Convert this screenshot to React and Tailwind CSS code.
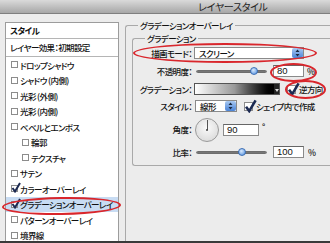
const effects = [
  { label: "ドロップシャドウ" },
  { label: "シャドウ (内側)" },
  { label: "光彩 (外側)" },
  { label: "光彩 (内側)" },
  { label: "ベベルとエンボス" },
  { label: "輪郭", indent: true },
  { label: "テクスチャ", indent: true },
  { label: "サテン" },
  { label: "カラーオーバーレイ", checked: true },
  { label: "グラデーションオーバーレイ", checked: true, selected: true },
  { label: "パターンオーバーレイ" },
  { label: "境界線" },
];

function Check({ checked, size = "sm" }) {
  const box = size === "sm" ? "w-[7px] h-[7px]" : "w-[9px] h-[9px]";
  return (
    <span className={`relative ${box} shrink-0 border border-[#8c8c8c] bg-white`}>
      {checked && (
        <svg
          className="absolute left-[-1px] top-[-4px]"
          width={size === "sm" ? 10 : 13}
          height={size === "sm" ? 11 : 14}
          viewBox="0 0 10 11"
        >
          <path d="M1.5 6 L4 9.5 L9 1" fill="none" stroke="#1c2a52" strokeWidth="2" />
        </svg>
      )}
    </span>
  );
}

function Stepper() {
  return (
    <span className="flex h-full w-[11px] items-center justify-center rounded-[2px] bg-gradient-to-b from-[#a9c9f2] to-[#4a83d6]">
      <svg width="5" height="8" viewBox="0 0 5 8">
        <path d="M2.5 0.5 L4.5 3 L0.5 3 Z M0.5 5 L4.5 5 L2.5 7.5 Z" fill="#1a2a44" />
      </svg>
    </span>
  );
}

function Slider({ pos }) {
  return (
    <div className="relative flex h-[10px] w-[71px] items-center">
      <div className="h-[3px] w-full rounded-full border border-[#6d6d6d] bg-gradient-to-b from-[#999] to-[#555]" />
      <span
        className="absolute top-[1px] h-[8px] w-[8px] rounded-full border border-[#3d6fb5] bg-[radial-gradient(circle_at_40%_35%,#d9e9fc,#4d8ee0)]"
        style={{ left: pos - 4 }}
      />
    </div>
  );
}

function Field({ value, w }) {
  return (
    <span
      className={`flex h-[12px] ${w} items-center border border-[#8a8a8a] border-t-[#666] bg-white pl-[3px] text-[9.5px] leading-none tracking-normal text-[#111] [font-family:'Liberation_Sans',sans-serif]`}
    >
      {value}
    </span>
  );
}

function Label({ children }) {
  return (
    <span className="flex w-[61px] shrink-0 justify-end whitespace-nowrap pr-[2px] text-[#111]">{children}</span>
  );
}

export default function App() {
  return (
    <div className="relative h-[243px] w-[330px] overflow-hidden border-b-2 border-[#3a3a3a] bg-[#ececec] text-[8.5px] font-medium tracking-[-0.6px] [font-family:'Noto_Sans_CJK_JP',sans-serif] [font-feature-settings:'palt']">
      <div className="flex h-[14px] items-center whitespace-nowrap border-b border-[#7f7f7f] bg-gradient-to-b from-[#dadada] to-[#a7a7a7] pl-[198px] text-[10px] font-normal leading-[12px] tracking-[-0.3px] text-[#1e1e1e]">
        レイヤースタイル
      </div>

      <div className="flex">
        <div className="ml-[5px] mt-[8px] flex h-[240px] w-[114px] shrink-0 flex-col whitespace-nowrap border border-[#9c9c9c] bg-white leading-none text-[#111]">
          <div className="flex h-[16px] items-center border-b border-[#b5b5b5] pl-[4px] font-bold">スタイル</div>
          <div className="flex h-[18px] items-center border-b border-[#b5b5b5] pl-[4px]">レイヤー効果：初期設定</div>
          {effects.map((e) => (
            <div
              key={e.label}
              className={`flex h-[15.5px] shrink-0 items-center gap-[2px] ${e.indent ? "pl-[16px]" : "pl-[5px]"} ${e.selected ? "bg-[#c8dcf3]" : ""}`}
            >
              <Check checked={e.checked} />
              <span>{e.label}</span>
            </div>
          ))}
        </div>

        <fieldset className="ml-[6px] mt-[5px] h-[260px] w-[240px] shrink-0 rounded-tl-[3px] border-l border-t border-[#a9a9a9]">
          <legend className="ml-[12px] whitespace-nowrap px-[2px] leading-[12px] text-[#111]">グラデーションオーバーレイ</legend>

          <fieldset className="ml-[6px] mt-[1px] w-[240px] rounded-l-[3px] border-b border-l border-t border-[#a9a9a9] pb-[6px]">
            <legend className="ml-[12px] whitespace-nowrap px-[2px] leading-[12px] text-[#111]">グラデーション</legend>

            <div className="flex h-[18px] items-center">
              <Label>描画モード：</Label>
              <span className="flex h-[12px] w-[110px] items-center justify-between border border-[#8a8a8a] bg-white pl-[4px] leading-none text-[#111]">
                スクリーン
                <Stepper />
              </span>
            </div>

            <div className="flex h-[18px] items-center">
              <Label>不透明度：</Label>
              <span className="ml-[2px]">
                <Slider pos={58} />
              </span>
              <span className="ml-[6px]">
                <Field value="80" w="w-[31px]" />
              </span>
              <span className="ml-[3px] text-[#111]">%</span>
            </div>

            <div className="flex h-[18px] items-center">
              <Label>グラデーション：</Label>
              <span className="flex h-[12px] w-[86px] border border-[#555]">
                <span className="flex-1 bg-gradient-to-r from-white via-[#9a9a9a] to-black" />
                <span className="flex w-[5px] items-end justify-center bg-[#222] pb-[2px]">
                  <svg width="4" height="3" viewBox="0 0 4 3">
                    <path d="M0 0 L4 0 L2 3 Z" fill="#ddd" />
                  </svg>
                </span>
              </span>
              <span className="ml-[7px] flex items-center gap-[3px] whitespace-nowrap text-[#111]">
                <Check checked size="md" />
                逆方向
              </span>
            </div>

            <div className="flex h-[16px] items-center">
              <Label>スタイル：</Label>
              <span className="ml-[1px] flex h-[12px] w-[42px] items-center justify-between border border-[#8a8a8a] bg-white pl-[4px] leading-none text-[#111]">
                線形
                <Stepper />
              </span>
              <span className="ml-[7px] flex items-center gap-[3px] whitespace-nowrap text-[#111]">
                <Check checked size="md" />
                シェイプ内で作成
              </span>
            </div>

            <div className="flex h-[31px] items-center">
              <Label>角度：</Label>
              <span className="relative ml-[1px] h-[24px] w-[24px] rounded-full border border-[#9a9a9a] bg-[radial-gradient(circle_at_50%_40%,#fafafa,#d4d4d4)]">
                <span className="absolute left-[11px] top-[1px] h-[10px] w-[1px] bg-[#555]" />
                <span className="absolute left-[10px] top-[10px] h-[2px] w-[2px] rounded-full bg-[#444]" />
              </span>
              <span className="ml-[4px]">
                <Field value="90" w="w-[36px]" />
              </span>
              <span className="mb-[6px] ml-[3px] text-[#111]">°</span>
            </div>

            <div className="flex h-[14px] items-center">
              <Label>比率：</Label>
              <span className="ml-[2px]">
                <Slider pos={46} />
              </span>
              <span className="ml-[6px]">
                <Field value="100" w="w-[31px]" />
              </span>
              <span className="ml-[4px] text-[#111]">%</span>
            </div>
          </fieldset>
        </fieldset>
      </div>

      <span className="absolute left-[2px] top-[197px] h-[18px] w-[119px] -rotate-1 rounded-[50%] border-2 border-[#d9262c]" />
      <span className="absolute left-[133px] top-[43px] h-[20px] w-[184px] rounded-[50%] border-2 border-[#d9262c]" />
      <span className="absolute left-[270px] top-[63px] h-[19px] w-[47px] rounded-[50%] border-2 border-[#d9262c]" />
      <span className="absolute left-[285px] top-[80px] h-[19px] w-[41px] rounded-[50%] border-2 border-[#d9262c]" />
    </div>
  );
}
